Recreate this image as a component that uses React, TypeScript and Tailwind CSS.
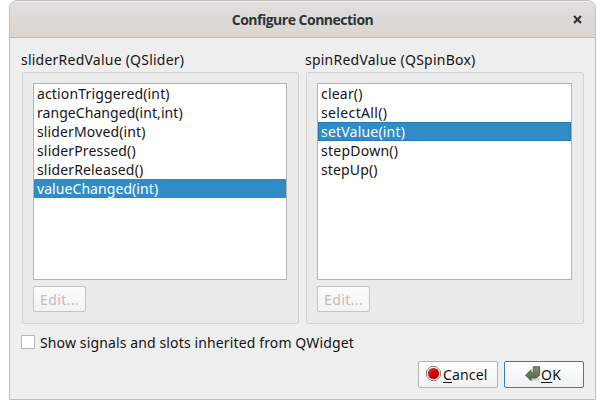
import React from "react";

type Entry = { text: string; tracking: string };

const signals: Entry[] = [
  { text: "actionTriggered(int)", tracking: "tracking-[0.15px]" },
  { text: "rangeChanged(int,int)", tracking: "tracking-[0.06px]" },
  { text: "sliderMoved(int)", tracking: "tracking-[0.13px]" },
  { text: "sliderPressed()", tracking: "tracking-[0.16px]" },
  { text: "sliderReleased()", tracking: "tracking-[0.16px]" },
  { text: "valueChanged(int)", tracking: "tracking-[0.07px]" },
];

const slots: Entry[] = [
  { text: "clear()", tracking: "tracking-[0.2px]" },
  { text: "selectAll()", tracking: "tracking-[0.36px]" },
  { text: "setValue(int)", tracking: "tracking-[0.2px]" },
  { text: "stepDown()", tracking: "tracking-[0.25px]" },
  { text: "stepUp()", tracking: "tracking-[0.14px]" },
];

function MethodGroup({
  title,
  width,
  listWidth,
  entries,
  selected,
  focused,
}: {
  title: string;
  width: string;
  listWidth: string;
  entries: Entry[];
  selected: number;
  focused?: boolean;
}) {
  return (
    <section className={width}>
      <h2 className="-ml-px h-[22px] leading-[20px] tracking-[0.23px] whitespace-nowrap">{title}</h2>
      <div className="h-[252px] rounded-[2px] border border-[#d4d4d4] bg-[#ebebeb] pt-[10px] pl-[10px]">
        <ul className={`h-[197px] border border-[#b4b4b4] bg-white ${listWidth}`}>
          {entries.map((e, i) => (
            <li
              key={e.text}
              className={`h-[19px] pl-[3px] leading-[19px] whitespace-nowrap ${e.tracking} ${
                i === selected ? "bg-[#308cc6] text-white" : ""
              } ${i === selected && focused ? "shadow-[inset_0_0_0_1px_#2a7ab0]" : ""}`}
            >
              {e.text}
            </li>
          ))}
        </ul>
        <button
          disabled
          className="mt-[6px] block h-[26px] w-[53px] rounded-[2px] border border-[#c3c3c3] bg-linear-to-b from-[#fcfcfc] to-[#f3f3f3] leading-[25px] tracking-[0.35px] text-[#bebebe]"
        >
          Edit...
        </button>
      </div>
    </section>
  );
}

export default function App() {
  return (
    <div className="h-[409px] w-[605px] bg-white pl-[9px] font-['Noto_Sans','Open_Sans',sans-serif] text-[14px] text-[#141414]">
      <div className="h-[400px] w-[587px] overflow-hidden rounded-t-[8px] border border-[#bfbfbf] bg-[#eeeeee]">
        <header className="flex h-[37px] items-center justify-center border-t border-b border-t-[#f5f4f3] border-b-[#bfb8b1] bg-linear-to-b from-[#e1dedb] to-[#dad6d2]">
          <div className="w-[28px]" />
          <h1 className="flex-1 text-center font-['Open_Sans','Noto_Sans',sans-serif] text-[14px] font-bold tracking-[-0.5px] text-[#2e3436]">
            Configure Connection
          </h1>
          <button aria-label="Close" className="flex w-[28px] justify-start pl-[6px]">
            <svg width="9" height="9" viewBox="0 0 9 9" stroke="#2e3436" strokeWidth="2.2">
              <path d="M1 1L8 8M8 1L1 8" />
            </svg>
          </button>
        </header>
        <main className="pt-[12px] pl-[12px]">
          <div className="flex gap-[7px]">
            <MethodGroup title="sliderRedValue (QSlider)" width="w-[277px]" listWidth="w-[254px]" entries={signals} selected={5} />
            <MethodGroup title="spinRedValue (QSpinBox)" width="w-[278px]" listWidth="w-[255px]" entries={slots} selected={2} focused />
          </div>
          <label className="mt-[7px] -ml-px flex h-[22px] items-center">
            <span className="h-[14px] w-[14px] border border-[#b7b7b7] bg-white" />
            <span className="ml-[5px] tracking-[0.13px]">Show signals and slots inherited from QWidget</span>
          </label>
          <footer className="mt-[8px] mr-[11px] flex justify-end gap-[6px]">
            <button className="flex h-[27px] w-[80px] items-center rounded-[2px] border border-[#b4b4b4] bg-linear-to-b from-[#fefefe] to-[#f2f2f2] pl-[7px]">
              <svg width="16" height="16" viewBox="0 0 16 16" className="mb-[1px]">
                <defs>
                  <linearGradient id="stop" x1="0" y1="0" x2="1" y2="1">
                    <stop offset="0" stopColor="#f03030" />
                    <stop offset=".6" stopColor="#cc0000" />
                    <stop offset="1" stopColor="#b00000" />
                  </linearGradient>
                </defs>
                <path d="M4.8.5h5.400l4.300 4.300v5.400l-4.300 4.300H4.800L.5 10.200V4.800z" fill="#eeeeec" stroke="#858783" />
                <circle cx="7.5" cy="7.5" r="5.6" fill="url(#stop)" />
              </svg>
              <span className="ml-px tracking-[0.15px]">
                <u className="decoration-1 underline-offset-2">C</u>ancel
              </span>
            </button>
            <button className="flex h-[27px] w-[80px] items-center rounded-[2px] border border-[#307fb1] bg-linear-to-b from-[#fefefe] to-[#eef2f5] pl-[20px]">
              <svg width="16" height="16" viewBox="0 0 16 16" className="mb-[2px]">
                <defs>
                  <linearGradient id="enter" x1="0" y1="0" x2="0" y2="1">
                    <stop offset="0" stopColor="#7f906d" />
                    <stop offset="1" stopColor="#52673f" />
                  </linearGradient>
                </defs>
                <ellipse cx="10" cy="13.3" rx="5" ry="1.6" fill="#000" opacity=".13" />
                <path
                  d="M8.300 .7h6.300v8.300L11.600 12H6v2.700L.600 9.200 6 3.800v2.700h1.200L8.300 5.400z"
                  fill="url(#enter)"
                  stroke="#4a5a40"
                  strokeWidth=".9"
                />
              </svg>
              <span className="tracking-[0.4px]">
                <u className="decoration-1 underline-offset-2">O</u>K
              </span>
            </button>
          </footer>
        </main>
      </div>
    </div>
  );
}
